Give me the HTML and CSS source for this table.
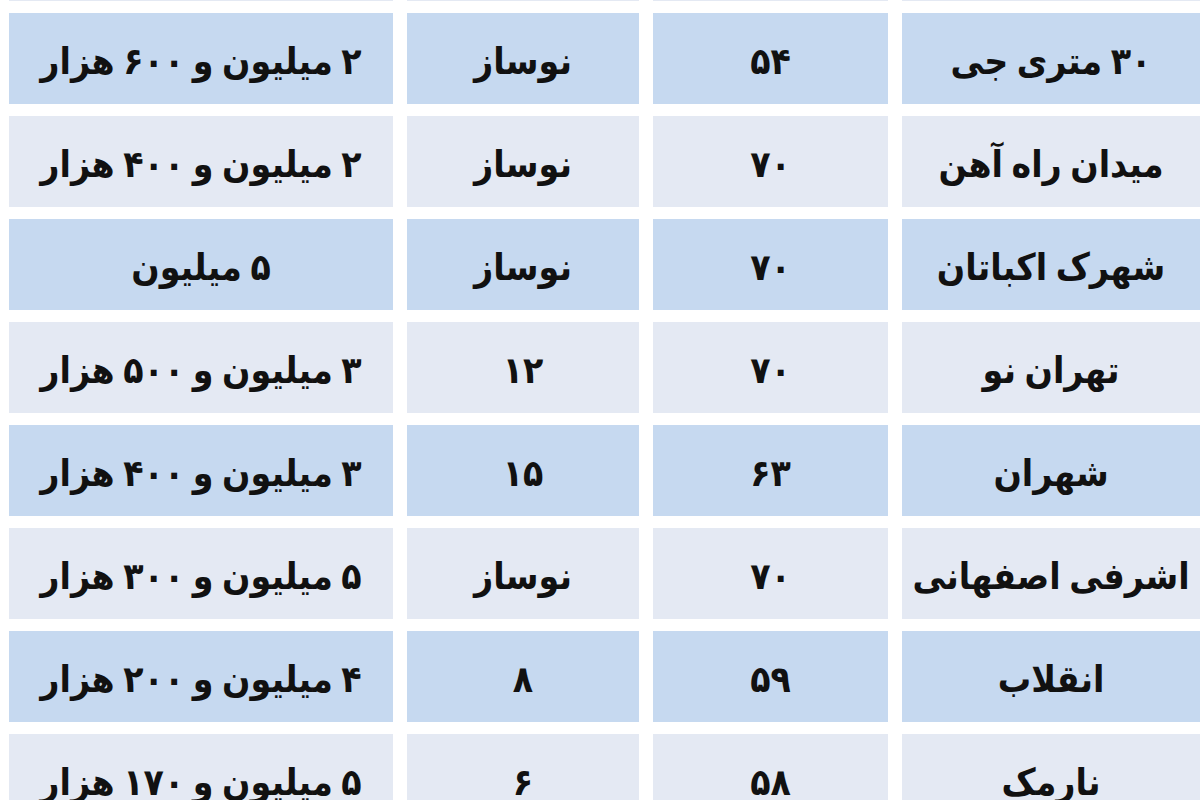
FILE: index.html
```html
<!DOCTYPE html>
<html lang="fa" dir="rtl">
<head>
<meta charset="utf-8">
<title>جدول اجاره</title>
<link rel="stylesheet" href="styles.css">
</head>
<body>
<div class="table">
  <div class="row light">
    <div class="cell"></div><div class="cell"></div><div class="cell"></div><div class="cell"></div>
  </div>
  <div class="row blue">
    <div class="cell">۳۰ متری جی</div><div class="cell">۵۴</div><div class="cell">نوساز</div><div class="cell">۲ میلیون و ۶۰۰ هزار</div>
  </div>
  <div class="row light">
    <div class="cell">میدان راه آهن</div><div class="cell">۷۰</div><div class="cell">نوساز</div><div class="cell">۲ میلیون و ۴۰۰ هزار</div>
  </div>
  <div class="row blue">
    <div class="cell">شهرک اکباتان</div><div class="cell">۷۰</div><div class="cell">نوساز</div><div class="cell">۵ میلیون</div>
  </div>
  <div class="row light">
    <div class="cell">تهران نو</div><div class="cell">۷۰</div><div class="cell">۱۲</div><div class="cell">۳ میلیون و ۵۰۰ هزار</div>
  </div>
  <div class="row blue">
    <div class="cell">شهران</div><div class="cell">۶۳</div><div class="cell">۱۵</div><div class="cell">۳ میلیون و ۴۰۰ هزار</div>
  </div>
  <div class="row light">
    <div class="cell">اشرفی اصفهانی</div><div class="cell">۷۰</div><div class="cell">نوساز</div><div class="cell">۵ میلیون و ۳۰۰ هزار</div>
  </div>
  <div class="row blue">
    <div class="cell">انقلاب</div><div class="cell">۵۹</div><div class="cell">۸</div><div class="cell">۴ میلیون و ۲۰۰ هزار</div>
  </div>
  <div class="row light">
    <div class="cell">نارمک</div><div class="cell">۵۸</div><div class="cell">۶</div><div class="cell">۵ میلیون و ۱۷۰ هزار</div>
  </div>
</div>
</body>
</html>
```
FILE: styles.css
```css
html, body {
  margin: 0;
  padding: 0;
  background: #ffffff;
  overflow: hidden;
}
body {
  width: 1200px;
  height: 800px;
  font-family: "DejaVu Sans Condensed", "DejaVu Sans", sans-serif;
  font-weight: bold;
  color: #111111;
}
.table {
  display: flex;
  flex-direction: column;
  gap: 12px;
  margin-top: -90px;
  padding-left: 9px;
}
.row {
  display: grid;
  grid-template-columns: 298px 235px 232px 384px;
  column-gap: 14px;
  height: 91px;
}
.cell {
  display: flex;
  align-items: center;
  justify-content: center;
  padding-top: 6px;
  box-sizing: border-box;
  font-size: 37px;
  word-spacing: -3px;
  white-space: nowrap;
}
.blue .cell {
  background: #c6d9f0;
}
.light .cell {
  background: #e4e9f3;
}
```
